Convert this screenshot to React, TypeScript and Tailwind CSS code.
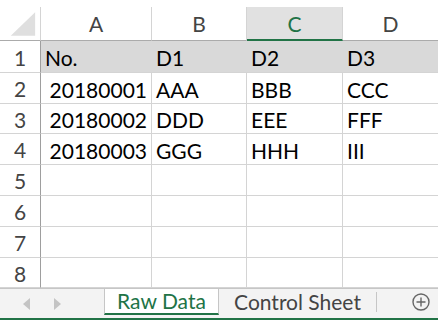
// App.tsx — hoja de cálculo estilo Excel con pestañas de hojas
const colW = ['w-[111px]', 'w-[95px]', 'w-[96px]', 'w-[96px]'];
const colNames = ['A', 'B', 'C', 'D'];
const rowH = ['h-[32px]', 'h-[31px]', 'h-[30px]', 'h-[31px]', 'h-[31px]', 'h-[31px]', 'h-[31px]', 'h-[30px]'];

const data: string[][] = [
  ['No.', 'D1', 'D2', 'D3'],
  ['20180001', 'AAA', 'BBB', 'CCC'],
  ['20180002', 'DDD', 'EEE', 'FFF'],
  ['20180003', 'GGG', 'HHH', 'III'],
];

export default function App() {
  return (
    <div className="w-[438px] h-[320px] overflow-hidden bg-white flex flex-col font-['Lato',sans-serif] text-[21px] leading-none">
      {/* Encabezados de columna */}
      <div className="pt-[7px] flex shrink-0">
        <div className="w-[41px] h-[34px] border-r border-b border-r-[#d4d4d4] border-b-[#ababab] flex items-end justify-end shrink-0">
          <svg aria-hidden="true" width="41" height="33" viewBox="0 0 41 33">
            <polygon points="36,5 36,29 11,29" fill="#dfdfdf" />
          </svg>
        </div>
        {colNames.map((c, i) => (
          <div
            key={c}
            className={`${colW[i]} h-[34px] shrink-0 border-r border-r-[#d4d4d4] flex items-center justify-center ${
              c === 'C'
                ? 'bg-[#e1e1e1] text-[#217346] border-b-2 border-b-[#217346]'
                : 'text-[#444] border-b border-b-[#ababab]'
            }`}
          >
            {c}
          </div>
        ))}
      </div>

      {/* Filas */}
      {rowH.map((h, r) => (
        <div key={r} className={`flex shrink-0 ${h}`}>
          <div className="w-[41px] shrink-0 border-r border-b border-r-[#9e9e9e] border-b-[#d4d4d4] flex items-center justify-center text-[#444] pt-[1px]">
            {r + 1}
          </div>
          {colW.map((w, c) => {
            const val = data[r]?.[c] ?? '';
            const isNum = /^\d+$/.test(val);
            return (
              <div
                key={c}
                className={`${w} shrink-0 flex items-center px-[4px] pt-[2px] text-black ${
                  r === 0 ? 'bg-[#d9d9d9] border-b border-b-[#d4d4d4]' : 'border-r border-b border-[#d4d4d4]'
                } ${isNum ? 'justify-end' : 'justify-start'}`}
              >
                {val}
              </div>
            );
          })}
        </div>
      ))}

      {/* Barra de pestañas */}
      <div className="flex-1 flex flex-col bg-[#f3f3f3] border-t border-[#c6c6c6]">
        <div className="flex-1 flex items-stretch">
          <div className="w-[104px] flex items-center shrink-0">
            <svg aria-hidden="true" className="ml-[23px]" width="8" height="12" viewBox="0 0 8 12">
              <polygon points="7,0 7,12 0,6" fill="#c4c4c4" />
            </svg>
            <svg aria-hidden="true" className="ml-[22px]" width="8" height="12" viewBox="0 0 8 12">
              <polygon points="1,0 1,12 8,6" fill="#c4c4c4" />
            </svg>
          </div>
          <div className="w-[115px] shrink-0 bg-white border-x border-[#c6c6c6] mb-[3px] border-b-2 border-b-[#217346] flex items-center justify-center text-[21px] text-[#217346] pb-[2px]">
            Raw Data
          </div>
          <div className="w-[157px] shrink-0 flex items-center justify-center text-[21px] text-[#444] pb-[4px]">
            Control Sheet
          </div>
          <div className="flex items-center">
            <div className="w-px h-[20px] bg-[#c6c6c6] mb-[4px]" />
          </div>
          <div className="flex-1 flex items-center justify-end pr-[8px] pb-[4px]">
            <svg aria-hidden="true" width="18" height="18" viewBox="0 0 18 18" fill="none" stroke="#666" strokeWidth="1.4">
              <circle cx="9" cy="9" r="8" />
              <path d="M9 4.5v9M4.5 9h9" />
            </svg>
          </div>
        </div>
        <div className="h-[2px] bg-[#217346]" />
      </div>
    </div>
  );
}
